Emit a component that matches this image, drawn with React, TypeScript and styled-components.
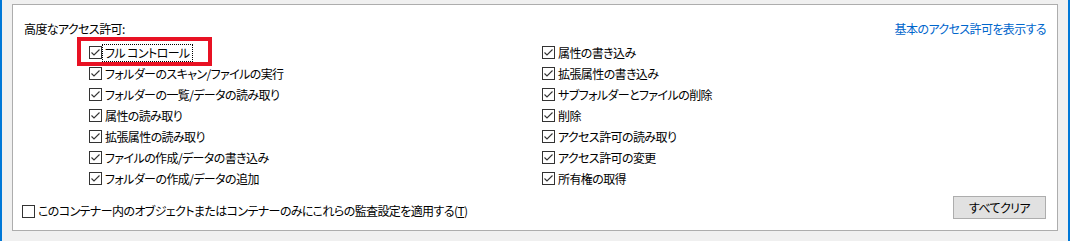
import React from 'react'
import styled, { createGlobalStyle } from 'styled-components'

const GlobalStyle = createGlobalStyle`
  html, body {
    margin: 0;
    padding: 0;
    background: #f0f0f0;
  }
  body {
    font-family: "Noto Sans CJK JP", "Noto Sans", sans-serif;
    font-size: 12px;
    color: #000;
    font-feature-settings: "palt";
    letter-spacing: -0.6px;
  }
`;

const Frame = styled.div`
  width: 1070px;
  height: 241px;
  box-sizing: border-box;
  border-left: 2px solid #0078d7;
  border-right: 2px solid #0078d7;
  padding: 4px 10px 0 10px;
`;

const Panel = styled.div`
  width: 1046px;
  height: 227px;
  box-sizing: border-box;
  background: #fff;
  border: 1px solid #adadad;
  padding: 16px 11px 0 11px;
  display: flex;
  flex-direction: column;
`;

const HeaderRow = styled.div`
  display: flex;
  justify-content: space-between;
  align-items: center;
  height: 16px;
  line-height: 16px;
`;

const LinkText = styled.a`
  color: #0066cc;
  text-decoration: none;
  cursor: pointer;
`;

const Grid = styled.div`
  margin-top: 5px;
  padding-left: 65px;
  display: grid;
  grid-template-columns: 453px 1fr;
  grid-auto-flow: column;
  grid-template-rows: repeat(7, 21px);
`;

const Item = styled.label`
  position: relative;
  display: flex;
  align-items: center;
  height: 21px;
  line-height: 16px;
  white-space: nowrap;
`;

const Text = styled.span<{ $focused?: boolean }>`
  padding: 0 2px;
  height: 16px;
  outline: ${p => (p.$focused ? '1px dotted #000' : 'none')};
  outline-offset: 0;
`;

const Highlight = styled.div`
  position: absolute;
  left: -12px;
  top: -5px;
  width: 135px;
  height: 29px;
  box-sizing: border-box;
  border: 4px solid #e81123;
  pointer-events: none;
`;

const BoxWrap = styled.span`
  width: 13px;
  height: 13px;
  margin-right: 1px;
  flex: none;
  display: inline-flex;
`;

const BottomRow = styled.div`
  margin-top: 7px;
  margin-left: -2px;
  display: flex;
  justify-content: space-between;
  align-items: flex-end;
`;

const BottomItem = styled(Item)`
  height: 16px;
`;

const Button = styled.button`
  width: 93px;
  height: 23px;
  box-sizing: border-box;
  background: #e1e1e1;
  border: 1px solid #adadad;
  font-family: inherit;
  font-size: 12px;
  font-feature-settings: "palt";
  letter-spacing: -0.6px;
  color: #000;
  padding: 0;
`;

const CheckBox = ({ checked }: { checked: boolean }) => (
  <BoxWrap>
    <svg width="13" height="13" viewBox="0 0 13 13">
      <rect x="0.5" y="0.5" width="12" height="12" fill="#fff" stroke="#333" />
      {checked && (
        <path d="M2.5 6.5 L5 9 L10.5 3.5" fill="none" stroke="#333" strokeWidth="1.1" />
      )}
    </svg>
  </BoxWrap>
);

const leftItems = [
  'フル コントロール',
  'フォルダーのスキャン/ファイルの実行',
  'フォルダーの一覧/データの読み取り',
  '属性の読み取り',
  '拡張属性の読み取り',
  'ファイルの作成/データの書き込み',
  'フォルダーの作成/データの追加',
];

const rightItems = [
  '属性の書き込み',
  '拡張属性の書き込み',
  'サブフォルダーとファイルの削除',
  '削除',
  'アクセス許可の読み取り',
  'アクセス許可の変更',
  '所有権の取得',
];

const App = () => {
  return (
    <>
      <GlobalStyle />
      <Frame>
        <Panel>
          <HeaderRow>
            <span>高度なアクセス許可:</span>
            <LinkText>基本のアクセス許可を表示する</LinkText>
          </HeaderRow>
          <Grid>
            {[...leftItems, ...rightItems].map((label, i) => (
              <Item key={`perm${i}`}>
                {i === 0 && <Highlight />}
                <CheckBox checked />
                <Text $focused={i === 0}>{label}</Text>
              </Item>
            ))}
          </Grid>
          <BottomRow>
            <BottomItem>
              <CheckBox checked={false} />
              <Text>
                このコンテナー内のオブジェクトまたはコンテナーのみにこれらの監査設定を適用する(<u>T</u>)
              </Text>
            </BottomItem>
            <Button>すべてクリア</Button>
          </BottomRow>
        </Panel>
      </Frame>
    </>
  );
}

export default App;
